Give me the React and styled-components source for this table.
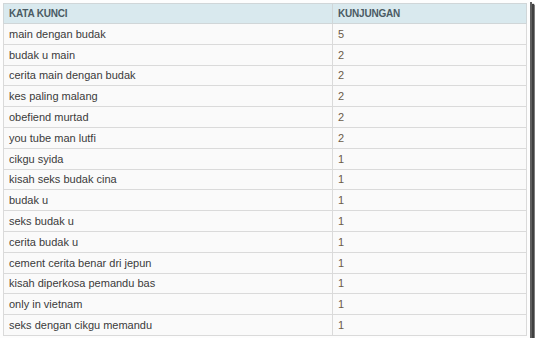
import React from "react";
import styled, { createGlobalStyle } from "styled-components";

const rows = [
  ["main dengan budak", 5],
  ["budak u main", 2],
  ["cerita main dengan budak", 2],
  ["kes paling malang", 2],
  ["obefiend murtad", 2],
  ["you tube man lutfi", 2],
  ["cikgu syida", 1],
  ["kisah seks budak cina", 1],
  ["budak u", 1],
  ["seks budak u", 1],
  ["cerita budak u", 1],
  ["cement cerita benar dri jepun", 1],
  ["kisah diperkosa pemandu bas", 1],
  ["only in vietnam", 1],
  ["seks dengan cikgu memandu", 1],
];

const GlobalStyle = createGlobalStyle`
  html, body {
    margin: 0;
    padding: 0;
    background: #ffffff;
  }
`;

const Frame = styled.div`
  width: 530px;
  height: 338px;
  box-sizing: border-box;
  padding: 3px 0 0 3px;
  background: #fdfdfd;
  box-shadow: 2px 2px 0 0 #5e5e5e, 4px 4px 1px 0 #404040, 5px 5px 1px 0 #8a8a8a;
`;

const Table = styled.table`
  width: 524px;
  border-collapse: collapse;
  font-family: "Liberation Sans", Arial, sans-serif;
  font-size: 11px;
  color: #333;
  table-layout: fixed;
  border: 1px solid #d8d8d8;
`;

const Head = styled.th`
  height: 19px;
  padding: 0 0 0 5px;
  text-align: left;
  font-weight: bold;
  font-size: 10px;
  letter-spacing: -0.2px;
  color: #4a5a63;
  background: #d9e9ee;
  border: 1px solid #d0d6d8;
  width: ${(p) => p.$w || "auto"};
`;

const Row = styled.tr`
  height: 20.8px;
  background: #fafafa;
`;

const Cell = styled.td`
  padding: 0 0 0 5px;
  border: 1px solid #dadada;
  color: ${(p) => (p.$num ? "#6b5a48" : "#3a3a3a")};
  white-space: nowrap;
`;

export default function App() {
  return (
    <>
      <GlobalStyle />
      <Frame>
        <Table>
          <thead>
            <tr>
              <Head $w="323px">KATA KUNCI</Head>
              <Head>KUNJUNGAN</Head>
            </tr>
          </thead>
          <tbody>
            {rows.map(([k, v], i) => (
              <Row key={i}>
                <Cell>{k}</Cell>
                <Cell $num>{v}</Cell>
              </Row>
            ))}
          </tbody>
        </Table>
      </Frame>
    </>
  );
}
